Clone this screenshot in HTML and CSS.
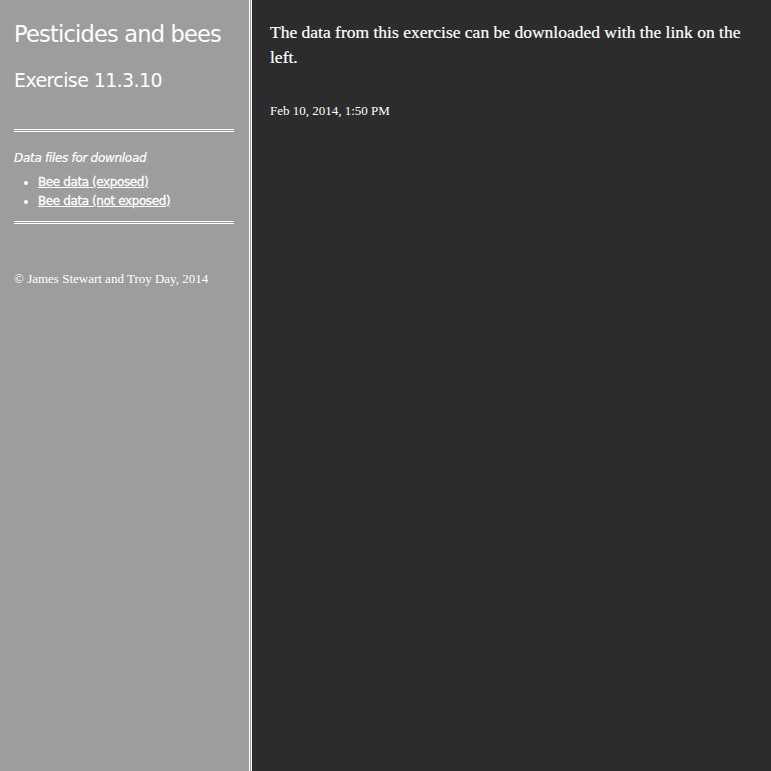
FILE: index.html
```html
<!DOCTYPE html>
<html>
<head>
<meta charset="utf-8">
<link rel="stylesheet" href="styles.css">
</head>
<body>
<div class="page">
  <aside class="sidebar">
    <h1 class="title">Pesticides and bees</h1>
    <h2 class="subtitle">Exercise 11.3.10</h2>
    <hr class="rule rule-top">
    <div class="downloads">
      <p class="downloads-label">Data files for download</p>
      <ul class="downloads-list">
        <li><a href="#">Bee data (exposed)</a></li>
        <li><a href="#">Bee data (not exposed)</a></li>
      </ul>
    </div>
    <hr class="rule rule-bottom">
    <p class="copyright">© James Stewart and Troy Day, 2014</p>
  </aside>
  <main class="content">
    <p class="intro">The data from this exercise can be downloaded with the link on the left.</p>
    <p class="date">Feb 10, 2014, 1:50 PM</p>
  </main>
</div>
</body>
</html>
```
FILE: styles.css
```css
html, body {
  margin: 0;
  padding: 0;
  height: 100%;
}
body {
  background: #2c2c2c;
  color: #fff;
}
.page {
  display: flex;
  min-height: 100vh;
}
.sidebar {
  width: 220px;
  flex: none;
  padding: 0 15px 0 14px;
  background: #9d9d9d;
  border-right: 3px double #fff;
  font-family: "DejaVu Sans", Verdana, sans-serif;
}
.title {
  margin: 0;
  padding-top: 19px;
  font-size: 22.5px;
  line-height: 30px;
  font-weight: normal;
  letter-spacing: -0.8px;
}
.subtitle {
  margin: 19px 0 0;
  font-size: 19px;
  line-height: 24px;
  font-weight: normal;
  letter-spacing: -0.6px;
}
.rule {
  border: 0;
  border-top: 3px double #fff;
  margin: 0;
  height: 0;
}
.rule-top {
  margin-top: 37px;
}
.downloads {
  padding: 18px 0 10px;
}
.downloads-label {
  margin: 0;
  font-size: 12px;
  font-style: italic;
  line-height: 16px;
  letter-spacing: -0.3px;
  -webkit-text-stroke: 0.2px #fff;
}
.downloads-list {
  margin: 7px 0 0;
  padding-left: 24px;
  font-size: 12px;
  line-height: 19px;
}
.downloads-list a {
  color: #fff;
  font-weight: normal;
  text-decoration: underline;
  letter-spacing: -0.4px;
  -webkit-text-stroke: 0.3px #fff;
}
.copyright {
  margin: 47px 0 0;
  font-family: "Liberation Serif", "Times New Roman", serif;
  font-size: 13px;
}
.content {
  flex: 1;
  padding: 0 18px;
  font-family: "Liberation Serif", "Times New Roman", serif;
}
.intro {
  margin: 20px 0 0;
  font-size: 17.5px;
  line-height: 25px;
  -webkit-text-stroke: 0.2px #fff;
}
.date {
  margin: 33px 0 0;
  font-size: 13px;
}
```
